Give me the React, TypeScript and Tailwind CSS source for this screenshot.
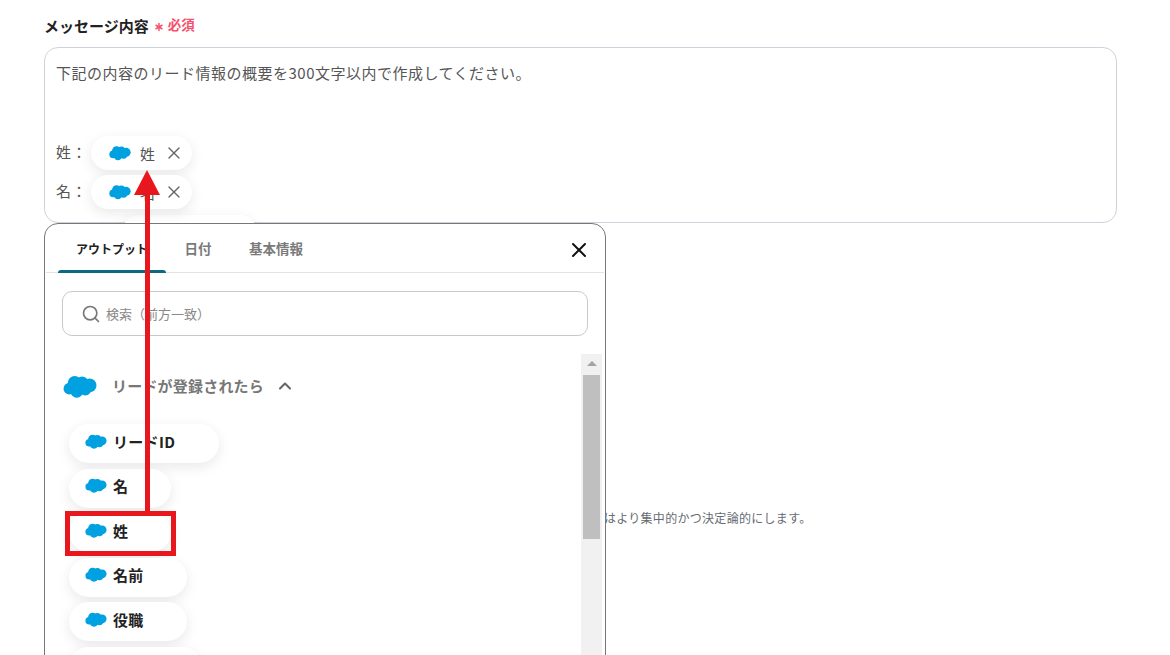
import React from 'react';
import { Search, X, ChevronUp, Asterisk } from 'lucide-react';

const FONT = "font-['Noto_Sans_CJK_JP','Noto_Sans',sans-serif]";

function Cloud({ className }: { className?: string }) {
  return (
    <svg viewBox="0 0 32 22" className={className} fill="#00a1e0">
      <circle cx="11" cy="7.5" r="6.5" />
      <circle cx="18" cy="7" r="5.5" />
      <circle cx="25" cy="10" r="6.5" />
      <circle cx="6" cy="13" r="5.5" />
      <circle cx="13" cy="15.5" r="6" />
      <circle cx="21" cy="14" r="5.5" />
    </svg>
  );
}

function InputPill({ label }: { label: string }) {
  return (
    <div className="flex items-center h-[34px] w-[101px] rounded-full bg-white shadow-[0_4px_14px_rgba(0,0,0,0.09)] pl-[18px] shrink-0">
      <Cloud className="w-[22px] h-[16px] shrink-0" />
      <span className="ml-[9px] text-[15px] text-[#555] leading-none">{label}</span>
      <X size={20} strokeWidth={1.6} className="ml-[8px] text-[#666]" />
    </div>
  );
}

function OutputPill({ label, width }: { label: string; width: string }) {
  return (
    <div className={`flex items-center h-[39px] rounded-full bg-white shadow-[0_4px_14px_rgba(0,0,0,0.09)] pl-[16px] pb-[5px] shrink-0 ${width}`}>
      <Cloud className="w-[22px] h-[15px] shrink-0" />
      <span className="ml-[6px] text-[15px] font-semibold tracking-[0.3px] text-[#222] leading-none">{label}</span>
    </div>
  );
}

export default function App() {
  return (
    <div className={`relative w-[1170px] h-[655px] overflow-hidden bg-white ${FONT}`}>
      <div className="pl-[44px] pr-[53px] pt-[14px]">
        {/* Field label */}
        <div className="flex items-center h-[22px]">
          <span className="text-[15px] font-semibold text-[#222] leading-none">メッセージ内容</span>
          <Asterisk size={14} strokeWidth={2.5} className="ml-[3px] mt-[3px] text-[#f4516c]" />
          <span className="ml-[2px] text-[13.5px] font-semibold text-[#f4516c] leading-none">必須</span>
        </div>

        {/* Message box */}
        <div className="relative mt-[11px] h-[176px] rounded-[14px] border border-[#cfd2da] pt-[14px] pl-[11px] text-[15px] tracking-[0.5px] text-[#555]">
          <p className="leading-[22px]">下記の内容のリード情報の概要を300文字以内で作成してください。</p>
          <div className="mt-[52px] flex items-center gap-[12px]">
            <span className="w-[23px] mb-[3px] leading-none whitespace-nowrap">姓：</span>
            <InputPill label="姓" />
          </div>
          <div className="mt-[5px] flex items-center gap-[12px]">
            <span className="w-[23px] mb-[3px] leading-none whitespace-nowrap">名：</span>
            <InputPill label="名" />
          </div>
          {/* Next pill, mostly covered by the popup */}
          <div className="ml-[66px] mt-[6px] h-[34px] w-[135px] rounded-full bg-white shadow-[0_4px_14px_rgba(0,0,0,0.09)]" />
        </div>

        {/* Help text behind the popup */}
        <p className="mt-[287px] pl-[523px] text-[12px] tracking-[0.3px] leading-[16px] text-[#666b73] whitespace-nowrap">
          モデルはより集中的かつ決定論的にします。
        </p>
      </div>

      {/* Output picker popup */}
      <div className="absolute left-[44px] top-[223px] w-[562px] h-[460px] rounded-t-[14px] border border-[#777] bg-white">
        <div className="relative flex h-[49px] border-b border-[#e3e3e3] mx-[1px] font-semibold">
          <div className="relative w-[108px] ml-[12px] pt-[1px] flex items-center justify-center text-[12px] text-[#222]">
            アウトプット
            <div className="absolute left-0 right-0 bottom-[-1px] h-[3px] rounded-t-[3px] bg-[#0b6a82]" />
          </div>
          <div className="w-[64px] pt-[1px] flex items-center justify-center text-[13.5px] text-[#7a7a7a]">日付</div>
          <div className="w-[92px] pt-[1px] flex items-center justify-center text-[13.5px] text-[#7a7a7a]">基本情報</div>
          <X size={24} strokeWidth={2} className="absolute right-[13px] top-[14px] text-[#111]" />
        </div>

        <div className="mx-[17px] mt-[18px] h-[45px] rounded-[10px] border border-[#c9c9c9] flex items-center pl-[18px]">
          <Search size={20} strokeWidth={2} className="text-[#777]" />
          <span className="ml-[5px] text-[13px] text-[#888]">検索（前方一致）</span>
        </div>

        <div className="flex mt-[18px]">
          <div className="flex-1 min-w-0">
            <div className="flex items-center h-[24px] mt-[20px] pl-[18px]">
              <Cloud className="w-[34px] h-[25px]" />
              <span className="ml-[15px] text-[15px] font-semibold tracking-[0.2px] text-[#777]">リードが登録されたら</span>
              <ChevronUp size={20} strokeWidth={2.5} className="ml-[11px] text-[#666]" />
            </div>
            <div className="mt-[26px] pl-[24px] flex flex-col gap-[5.5px]">
              <OutputPill label="リードID" width="w-[150px]" />
              <OutputPill label="名" width="w-[102px]" />
              <OutputPill label="姓" width="w-[102px]" />
              <OutputPill label="名前" width="w-[118px]" />
              <OutputPill label="役職" width="w-[118px]" />
              <OutputPill label="" width="w-[133px]" />
            </div>
          </div>
          {/* Scrollbar */}
          <div className="w-[21px] mr-[3px] h-[320px] bg-[#f1f1f1] px-[2px] pt-[21px] relative shrink-0">
            <div className="absolute left-[6px] top-[7px] w-0 h-0 border-x-[5px] border-x-transparent border-b-[5px] border-b-[#a3a3a3]" />
            <div className="h-[164px] bg-[#bfbfbf]" />
          </div>
        </div>
      </div>

      {/* Red annotation: arrow and highlight box */}
      <div className="absolute left-[145px] top-[188px] w-[5px] h-[325px] bg-[#e8171d]" />
      <div className="absolute left-[134px] top-[170px] w-0 h-0 border-x-[13px] border-x-transparent border-b-[25px] border-b-[#e8171d]" />
      <div className="absolute left-[65px] top-[511px] w-[111px] h-[45px] border-[5px] border-[#e8171d]" />
    </div>
  );
}
